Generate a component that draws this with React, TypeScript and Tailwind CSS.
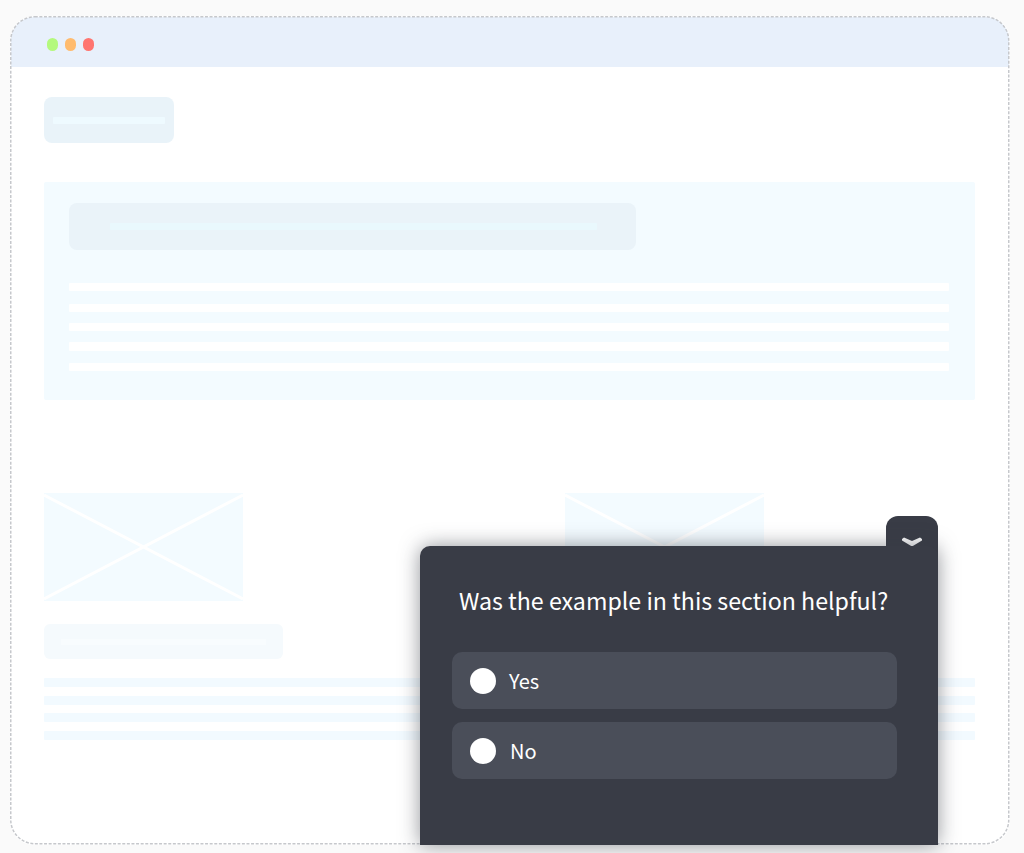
import React from "react";

function Placeholder() {
  return (
    <div className="w-[199px] h-[108px] bg-[#f3fbff]">
      <svg viewBox="0 0 199 108" className="block w-full h-full" preserveAspectRatio="none">
        <path d="M0 2 L199 106 M199 2 L0 106" stroke="#ffffff" strokeWidth="3" fill="none" />
      </svg>
    </div>
  );
}

function Option({ label, textClass }: { label: string; textClass: string }) {
  return (
    <div className="flex items-center h-[57px] rounded-[10px] bg-[#4a4e59] pl-[18px]">
      <span className="w-[26px] h-[26px] rounded-full bg-white shrink-0" />
      <span className={`text-[20px] leading-none text-white ${textClass}`}>{label}</span>
    </div>
  );
}

export default function App() {
  const lines = ["h-2", "h-2", "h-2", "h-[9px]", "h-2"];
  const lineGaps = ["", "mt-[13px]", "mt-[11px]", "mt-[11px]", "mt-3"];
  const bottomGaps = ["", "mt-[9px]", "mt-[8px]", "mt-[9px]"];
  return (
    <div className="min-h-[853px] bg-[#fafafa] pt-4 pl-2.5 font-['Noto_Sans_CJK_SC','Noto_Sans',sans-serif]">
      <div className="relative w-[1000px] h-[829px] rounded-[24px] border border-transparent bg-white">
        <div className="flex items-center gap-[7px] h-[50px] rounded-t-[23px] bg-[#e8f0fb] pl-[36px] pt-[5px]">
          <span className="w-[11px] h-[13px] rounded-full bg-[#b4f97d]" />
          <span className="w-[11px] h-[13px] rounded-full bg-[#ffbb6e]" />
          <span className="w-[11px] h-[13px] rounded-full bg-[#ff7570]" />
        </div>

        <div className="pl-[33px] pr-[34px] pt-[30px]">
          <div className="flex items-center justify-center w-[130px] h-[46px] rounded-lg bg-[#e9f3f9]">
            <div className="w-[112px] h-[7px] rounded-[1px] bg-[#eefaff]" />
          </div>

          <div className="mt-[39px] h-[218px] rounded-[2px] bg-[#f3fbff] pl-[25px] pr-[26px] pt-[21px]">
            <div className="flex items-center pl-[41px] w-[567px] h-[47px] rounded-lg bg-[#eaf3f9]">
              <div className="w-[487px] h-[7px] rounded-[1px] bg-[#e9f8fd]" />
            </div>
            <div className="mt-[33px] flex flex-col">
              {lines.map((h, i) => (
                <div key={i} className={`${h} ${lineGaps[i]} rounded-[1px] bg-white`} />
              ))}
            </div>
          </div>

          <div className="mt-[93px] flex gap-[322px]">
            <Placeholder />
            <Placeholder />
          </div>

          <div className="mt-[23px] flex items-center justify-center w-[239px] h-[35px] rounded-md bg-[#f5fafd]">
            <div className="w-[205px] h-[6px] bg-[#f8fcfe]" />
          </div>

          <div className="mt-[19px] flex flex-col">
            {bottomGaps.map((g, i) => (
              <div key={i} className={`h-[9px] ${g} rounded-[1px] bg-[#f2faff]`} />
            ))}
          </div>
        </div>

        <svg className="absolute -inset-px w-[1000px] h-[829px] pointer-events-none" viewBox="0 0 1000 829" fill="none">
          <rect x="0.75" y="0.75" width="998" height="827" rx="24" stroke="#c6c8cc" strokeWidth="1.5" strokeDasharray="3 1.6" />
        </svg>

        <div className="absolute left-[875px] top-[499px] w-[52px] h-[50px] rounded-t-[12px] bg-[#393c46] flex justify-center pt-[21px]">
          <svg width="20" height="10" viewBox="0 0 20 10">
            <path d="M2 0.5 L10 4 L18 0.5 L20 2 L20 3.5 L10 9.5 L0 3.5 L0 2 Z" fill="#ffffff" />
          </svg>
        </div>

        <div className="absolute left-[409px] top-[529px] w-[518px] h-[299px] rounded-t-[10px] bg-[#393c46] shadow-[0_0_20px_rgba(57,60,70,0.55)] px-[32px]">
          <p className="pt-[36px] pl-[7px] text-[23.2px] leading-[36px] text-white whitespace-nowrap">
            Was the example in this section helpful?
          </p>
          <div className="mt-[34px] w-[445px] flex flex-col gap-[13px]">
            <Option label="Yes" textClass="ml-[13px]" />
            <Option label="No" textClass="ml-[14px]" />
          </div>
        </div>
      </div>
    </div>
  );
}
